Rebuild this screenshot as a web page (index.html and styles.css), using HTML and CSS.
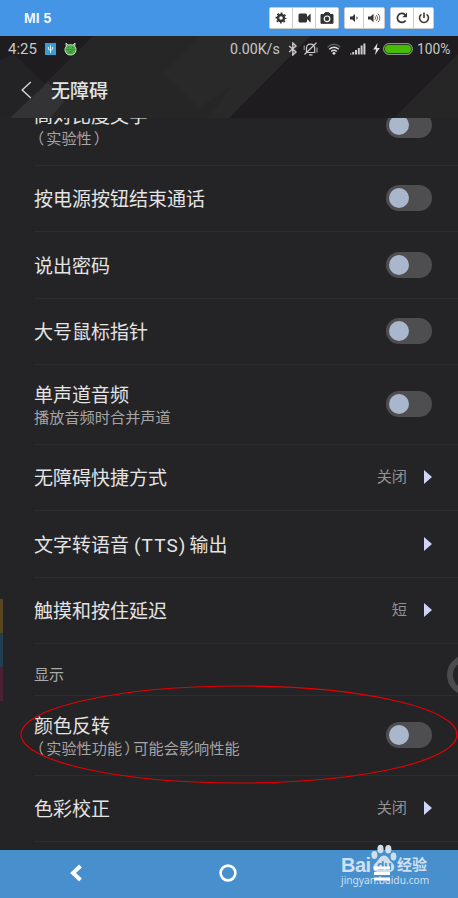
FILE: index.html
```html
<!DOCTYPE html>
<html lang="zh-CN">
<head>
  <meta charset="UTF-8" />
  <meta name="viewport" content="width=device-width, initial-scale=1.0" />
  <title>MI 5</title>
  <link rel="stylesheet" href="styles.css">
</head>
<body>
  <div class="toolbar">
    <span class="device">MI 5</span>
    <div class="btn-group">
      <button class="w22" title="设置">
        <svg width="12" height="12" viewBox="0 0 12 12"><circle cx="6" cy="6" r="3" fill="none" stroke="#333" stroke-width="2.4"/><circle cx="6" cy="6" r="4.7" fill="none" stroke="#333" stroke-width="1.6" stroke-dasharray="1.85 1.84" stroke-dashoffset=".9"/></svg>
      </button>
      <button class="w23" title="录像">
        <svg width="13" height="10" viewBox="0 0 13 10"><rect x=".5" y=".5" width="8.5" height="9" rx="1.5" fill="#333"/><path d="M8 5 12.6 .5V9.5Z" fill="#333"/></svg>
      </button>
      <button class="w23" title="截图">
        <svg width="14" height="12" viewBox="0 0 14 12"><path d="M1 2.5H4L5 .7H9L10 2.5H13V11.3H1Z" fill="#333" stroke="#333" stroke-linejoin="round"/><circle cx="7" cy="6.8" r="2.8" fill="none" stroke="#fff" stroke-width="1.2"/></svg>
      </button>
    </div>
    <div class="btn-group">
      <button class="w18" title="音量减">
        <svg width="9" height="8" viewBox="0 0 9 8"><path d="M0 2.5H2.3L5 0V8L2.3 5.5H0Z" fill="#333"/><path d="M6.5 2.7Q8.2 4 6.5 5.3" fill="none" stroke="#333"/></svg>
      </button>
      <button class="w21" title="音量加">
        <svg width="13" height="10" viewBox="0 0 13 10"><path d="M0 3.5H2.5L5.5 .8V9.2L2.5 6.5H0Z" fill="#333"/><path d="M7 3.4Q8.6 5 7 6.6M8.4 2Q11 5 8.4 8M9.9 .6Q13.8 5 9.9 9.4" fill="none" stroke="#7a5940" stroke-width=".9"/></svg>
      </button>
    </div>
    <div class="btn-group">
      <button class="w22" title="旋转">
        <svg width="12" height="12" viewBox="0 0 12 12"><path d="M9.6 8.5A4.5 4.5 0 1 1 9 2.7" fill="none" stroke="#333" stroke-width="1.7"/><path d="M11 .5V5.3H6.3Z" fill="#333"/></svg>
      </button>
      <button class="w20" title="电源">
        <svg width="12" height="12" viewBox="0 0 12 12"><path d="M3.5 2.3A4.5 4.5 0 1 0 8.5 2.3M6 .5V6" fill="none" stroke="#443528" stroke-width="1.6"/></svg>
      </button>
    </div>
  </div>

  <div class="header">
    <svg class="header-bg" width="458" height="82" viewBox="0 0 458 82">
      <path d="M93 0H310L229 82H10Z" fill="#262627"/>
      <path d="M0 24 14 18 50 53 22 82H0Z" fill="#232225"/>
      <path d="M10 82 48 46 64 66 50 82Z" fill="#333335"/>
      <path d="M200 0H310L229 82H209L230 51 199 72 163 37Z" fill="#29292a"/>
      <path d="M458 18V82H394Z" fill="#262626"/>
    </svg>
    <div class="status">
      <span class="clock">4:25</span>
      <svg class="usb" width="11" height="12" viewBox="0 0 11 12"><rect width="11" height="12" fill="#3b9bd4"/><path d="M5.5 2.3V10M3.4 4V6.2L5.5 7.6 7.6 6.2V4" fill="none" stroke="#e5f4fc"/></svg>
      <svg width="13" height="14" viewBox="0 0 13 14"><path d="M2 1 4 3.1Q6.5 2.2 9 3.1L11 1 10.8 4.5Q12.4 6 12 8.5 11 13 6.5 13T1 8.5Q.6 6 2.2 4.5Z" fill="#4fae4b" stroke="#d9ead9" stroke-width=".9"/><path d="M1.5 7.6H11.5" stroke="#2a8438" stroke-width=".8"/><path d="M3.8 5.5H5M8 5.5H9.2M4.5 10H8.5" stroke="#256b32" stroke-width=".8"/></svg>
      <span class="speed">0.00K/s</span>
      <svg class="bt" width="10" height="14" viewBox="0 0 10 14"><path d="M1.2 4 8 10 4.8 13V1L8 4 1.2 10" fill="none" stroke="#ccc" stroke-width="1.4"/></svg>
      <svg class="mute" width="16" height="14" viewBox="0 0 16 14"><path d="M3.5 10.5V6Q3.5 2.2 7.5 2.2T11.7 6V10.5ZM1.5 12.5 13.5 .7M6 12.8H9.5" fill="none" stroke="#ccc" stroke-width="1.2"/><path d="M1.2 3.5V8M14 5.5V10.5" stroke="#aaa"/></svg>
      <svg class="wifi" width="14" height="12" viewBox="0 0 14 12"><path d="M.5 4.3Q7-1.7 13.5 4.3" fill="none" stroke="#5b5b5c" stroke-width="1.3"/><path d="M2.2 6.3Q7 2.1 11.8 6.3M4.2 8.5Q7 6 9.8 8.5" fill="none" stroke="#ddd" stroke-width="1.5"/><circle cx="7" cy="10.3" r="1.4" fill="#ddd"/></svg>
      <svg class="signal" width="16" height="12" viewBox="0 0 16 12"><path d="M.5 11.5V10.5M3.2 11.5V9M6 11.5V7M8.8 11.5V5M11.6 11.5V2.5M14.4 11.5V.5" stroke="#ccc" stroke-width="2"/></svg>
      <svg class="bolt" width="7" height="12" viewBox="0 0 7 12"><path d="M4.5 0 .2 6.5H3L2 12 6.8 5H3.8Z" fill="#ddd"/></svg>
      <span class="battery"></span>
      <span class="percent">100%</span>
    </div>
    <div class="title-bar">
      <svg width="11" height="18" viewBox="0 0 11 18"><path d="M9.8 1 1.2 9 9.8 17" fill="none" stroke="#d6d6d6" stroke-width="1.4"/></svg>
      <h1>无障碍</h1>
    </div>
  </div>

  <div class="screen">
    <div class="list">
      <div class="row tall">
        <div class="text"><div class="name">高对比度文字</div><div class="desc"><span class="pl">（</span>实验性<span class="pr">）</span></div></div>
        <span class="switch"></span>
      </div>
      <div class="row"><div class="name">按电源按钮结束通话</div><span class="switch"></span></div>
      <div class="row"><div class="name">说出密码</div><span class="switch"></span></div>
      <div class="row"><div class="name">大号鼠标指针</div><span class="switch"></span></div>
      <div class="row tall">
        <div class="text"><div class="name">单声道音频</div><div class="desc">播放音频时合并声道</div></div>
        <span class="switch"></span>
      </div>
      <div class="row"><div class="name">无障碍快捷方式</div><span class="value">关闭</span><span class="arrow"></span></div>
      <div class="row"><div class="name">文字转语音<span class="tts">(TTS)</span>输出</div><span class="arrow"></span></div>
      <div class="row"><div class="name">触摸和按住延迟</div><span class="value">短</span><span class="arrow"></span></div>
      <div class="row section">显示</div>
      <div class="row tall">
        <div class="text"><div class="name">颜色反转</div><div class="desc"><span class="pl">（</span>实验性功能<span class="pr">）</span>可能会影响性能</div></div>
        <span class="switch"></span>
      </div>
      <div class="row"><div class="name">色彩校正</div><span class="value">关闭</span><span class="arrow"></span></div>
    </div>
    <div class="edge"><i></i><i></i><i></i></div>
    <div class="ball"></div>
  </div>

  <div class="nav">
    <svg width="14" height="18" viewBox="0 0 14 18"><path d="M11.5 2 4 9 11.5 16" fill="none" stroke="#fff" stroke-width="4"/></svg>
    <svg width="18" height="18" viewBox="0 0 18 18"><circle cx="9" cy="9" r="7.4" fill="none" stroke="#fff" stroke-width="2.6"/></svg>
    <svg class="menu" width="18" height="18" viewBox="0 0 18 18"><path d="M1 4H17M1 9.5H17M1 15H17" stroke="#fff" stroke-width="3"/></svg>
  </div>

  <!-- 标注椭圆 -->
  <svg class="mark" width="438" height="99" viewBox="0 0 438 99"><ellipse cx="219" cy="49.5" rx="218" ry="48.5" fill="none" stroke="#e60000" stroke-width="1.1"/></svg>

  <!-- 水印 -->
  <div class="watermark">
    <div class="brand">
      <span class="bai">Bai</span>
      <svg width="26" height="29" viewBox="0 0 26 29"><ellipse cx="9.5" cy="5" rx="3.1" ry="4.3"/><ellipse cx="17.3" cy="5.3" rx="3.1" ry="4.2"/><ellipse cx="3.4" cy="11" rx="3" ry="4.1"/><ellipse cx="22.5" cy="12.6" rx="2.9" ry="4.1"/><path d="M13 11.5C17 11.5 18 16 21 18.5 26 23 22 28.5 18 28H7C2 28 0 23 5 18.5 8 16 9 11.5 13 11.5Z"/></svg>
      <span class="du">du</span>
      <span class="jy">经验</span>
    </div>
    <div class="url">jingyan.baidu.com</div>
  </div>
</body>
</html>
```
FILE: styles.css
```css
* {
  box-sizing: border-box;
}
body {
  margin: 0;
  width: 458px;
  height: 898px;
  overflow: hidden;
  position: relative;
  background: #242326;
  color: #e4e4e4;
  font-family: Roboto, "Noto Sans CJK SC", sans-serif;
}
svg {
  display: block;
  flex: none;
}

/* 顶部工具栏 */
.toolbar {
  height: 36px;
  display: flex;
  align-items: center;
  gap: 5px;
  padding: 0 24px;
  background: #4595e6;
}
.device {
  flex: 1;
  font: bold 14px "Liberation Sans", sans-serif;
  color: #f4f8fd;
}
.btn-group {
  display: flex;
  height: 22px;
  border: 1px solid #ccc;
  border-radius: 2px;
  background: #fff;
}
.btn-group button {
  display: flex;
  align-items: center;
  justify-content: center;
  padding: 0;
  border: 0;
  background: none;
}
.btn-group button + button {
  border-left: 1px solid #ccc;
}
.w18 { width: 18px; }
.w20 { width: 20px; }
.w21 { width: 21px; }
.w22 { width: 22px; }
.w23 { width: 23px; }

/* 状态栏和标题 */
.header {
  height: 82px;
  position: relative;
  background: #1e1c1f;
}
.header-bg {
  position: absolute;
  top: 0;
  left: 0;
}
.status {
  position: relative;
  display: flex;
  align-items: center;
  height: 26px;
  padding-left: 8px;
  font-size: 14.2px;
  color: #c8c8c8;
  white-space: nowrap;
}
.clock {
  width: 37px;
  font-size: 15px;
}
.usb {
  margin-right: 8px;
}
.speed {
  width: 51px;
  margin-left: 153px;
}
.bt {
  margin-left: 7px;
}
.mute {
  margin-left: 5px;
}
.wifi {
  margin-left: 8px;
}
.signal {
  margin-left: 9px;
}
.bolt {
  margin-left: 7px;
}
.battery {
  width: 30px;
  height: 12px;
  margin: 0 4px 0 3px;
  border: 1px solid #8d8d8d;
  border-radius: 6px;
  background: #46bd00;
  box-shadow: inset 0 0 0 1px #2b3f20;
}
.percent {
  font-size: 13.8px;
}
.title-bar {
  position: relative;
  display: flex;
  align-items: center;
  height: 56px;
  padding-left: 21px;
}
.title-bar h1 {
  margin: 0 0 0 19px;
  padding-top: 4px;
  font-size: 19px;
  font-weight: 500;
  line-height: 28px;
}

/* 设置列表 */
.screen {
  height: 732px;
  position: relative;
  display: flex;
  flex-direction: column;
  overflow: hidden;
}
.list {
  flex: none;
  margin-top: -32px;
  padding-left: 34px;
}
.row {
  display: flex;
  align-items: center;
  height: 66.4px;
  padding-right: 26px;
  border-bottom: 1px solid #2d2c2f;
}
.row.tall {
  height: 79.8px;
}
.row.section {
  height: 52px;
  padding-top: 8px;
  font-size: 15px;
  color: #aaa;
}
.text,
.row > .name {
  flex: 1;
  padding-top: 3px;
}
.name {
  font-size: 19px;
  line-height: 25px;
  white-space: nowrap;
}
.desc {
  font-size: 15.2px;
  line-height: 21px;
  color: #a5a5a6;
}
.pl {
  margin: 0 2px 0 -5px;
}
.pr {
  margin: 0 -6px 0 2px;
}
.tts {
  margin: 0 3px 0 5px;
  letter-spacing: 1.1px;
}
.value {
  font-size: 15.2px;
  line-height: 20px;
  color: #929293;
}
.arrow {
  margin-left: 17px;
  border-left: 8px solid #ced3f8;
  border-top: 7px solid transparent;
  border-bottom: 7px solid transparent;
}
.switch {
  width: 46px;
  height: 26px;
  padding: 3px;
  border-radius: 13px;
  background: #4e4d50;
}
.switch::before {
  content: "";
  display: block;
  width: 20px;
  height: 20px;
  border-radius: 50%;
  background: #aab6cc;
}

/* 屏幕边缘的悬浮物 */
.edge {
  position: absolute;
  left: 0;
  top: 481px;
}
.edge i {
  display: block;
  width: 3px;
  height: 34px;
  background: #57461f;
}
.edge i:nth-child(2) {
  background: #213e51;
}
.edge i:nth-child(3) {
  background: #4a2032;
}
.ball {
  position: absolute;
  left: 447px;
  top: 537px;
  width: 40px;
  height: 40px;
  border: 6px solid #4b4a4c;
  border-radius: 50%;
}

/* 底部导航 */
.nav {
  display: flex;
  align-items: center;
  justify-content: space-between;
  height: 48px;
  padding: 0 67px 2px 69px;
  background: #488fce;
}
.menu {
  position: relative;
  z-index: 1;
}
.mark {
  position: absolute;
  left: 20px;
  top: 685px;
}

.watermark {
  position: absolute;
  left: 341px;
  top: 844px;
  color: #cfe0ef;
  fill: #cfdeeb;
}
.brand {
  display: flex;
  height: 29px;
  position: relative;
}
.bai {
  width: 30px;
  padding-top: 9px;
  font: bold 20px/24px "Liberation Sans", sans-serif;
  letter-spacing: -.5px;
}
.du {
  position: absolute;
  left: 36px;
  top: 16px;
  font: bold 12px/12px "Liberation Sans", sans-serif;
  color: #488fce;
}
.jy {
  margin-top: 9px;
  font-size: 15px;
  font-weight: bold;
  line-height: 24px;
}
.url {
  font: 10.2px/15px "Noto Sans", sans-serif;
}
```
